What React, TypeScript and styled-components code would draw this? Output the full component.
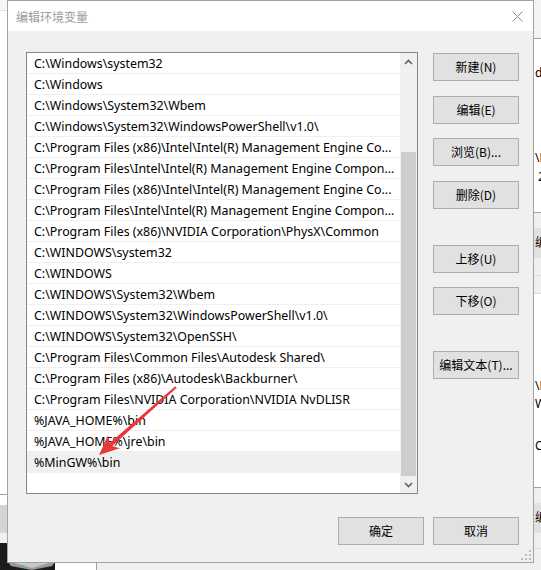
import React from 'react'
import styled, { createGlobalStyle } from 'styled-components'

const GlobalStyle = createGlobalStyle`
  html, body {
    margin: 0;
    padding: 0;
    background: #ffffff;
  }
  body {
    font-family: "Noto Sans", "Noto Sans CJK SC", sans-serif;
    font-size: 12px;
    color: #000000;
  }
  * {
    box-sizing: border-box;
  }
`

const paths = [
  'C:\\Windows\\system32',
  'C:\\Windows',
  'C:\\Windows\\System32\\Wbem',
  'C:\\Windows\\System32\\WindowsPowerShell\\v1.0\\',
  'C:\\Program Files (x86)\\Intel\\Intel(R) Management Engine Co...',
  'C:\\Program Files\\Intel\\Intel(R) Management Engine Compon...',
  'C:\\Program Files (x86)\\Intel\\Intel(R) Management Engine Co...',
  'C:\\Program Files\\Intel\\Intel(R) Management Engine Compon...',
  'C:\\Program Files (x86)\\NVIDIA Corporation\\PhysX\\Common',
  'C:\\WINDOWS\\system32',
  'C:\\WINDOWS',
  'C:\\WINDOWS\\System32\\Wbem',
  'C:\\WINDOWS\\System32\\WindowsPowerShell\\v1.0\\',
  'C:\\WINDOWS\\System32\\OpenSSH\\',
  'C:\\Program Files\\Common Files\\Autodesk Shared\\',
  'C:\\Program Files (x86)\\Autodesk\\Backburner\\',
  'C:\\Program Files\\NVIDIA Corporation\\NVIDIA NvDLISR',
  '%JAVA_HOME%\\bin',
  '%JAVA_HOME%\\jre\\bin',
  '%MinGW%\\bin',
]

const sideButtons = [
  { label: '新建(N)', mt: 1 },
  { label: '编辑(E)', mt: 15 },
  { label: '浏览(B)...', mt: 14 },
  { label: '删除(D)', mt: 15 },
  { label: '上移(U)', mt: 36 },
  { label: '下移(O)', mt: 14 },
  { label: '编辑文本(T)...', mt: 36 },
]

function App() {
  return (
    <>
      <GlobalStyle />
      <Desktop>
        {/* the window lying behind the dialog */}
        <LeftEdge>
          <Band $h={10} $bg='#f6f6f6' />
          <Band $h={1} $bg='#e3e3e3' />
          <Band $h={483} $bg='#ffffff' />
          <Band $h={1} $bg='#a0a0a0' />
          <Band $h={10} $bg='#ffffff' />
          <Band $h={28} $bg='#d4d4d4' />
          <Band $h={10} $bg='#f0f0f0' />
          <Band $h={27} $bg='#1c1c1c' />
        </LeftEdge>
        <RightEdge>
          <Band $h={38} $bg='#f4f4f4' />
          <Band $h={1} $bg='#a0a0a0' />
          <Band $h={173} $bg='#ffffff'>
            <Frag $mt={26}>dt</Frag>
            <Frag $mt={69}>\P</Frag>
            <Frag $mt={3}>&nbsp;2</Frag>
          </Band>
          <Band $h={1} $bg='#a0a0a0' />
          <Band $h={15} $bg='#f0f0f0' />
          <Band $h={30} $bg='#e1e1e1'>
            <Frag $mt={7}>编</Frag>
          </Band>
          <Band $h={17} $bg='#f0f0f0' />
          <Band $h={1} $bg='#dcdcdc' />
          <Band $h={17} $bg='#f0f0f0' />
          <Band $h={1} $bg='#dcdcdc' />
          <Band $h={193} $bg='#ffffff'>
            <Frag $mt={84}>\N</Frag>
            <Frag $mt={2}>W</Frag>
            <Frag $mt={26}>C</Frag>
          </Band>
          <Band $h={1} $bg='#a0a0a0' />
          <Band $h={15} $bg='#f0f0f0' />
          <Band $h={30} $bg='#e1e1e1'>
            <Frag $mt={7}>编</Frag>
          </Band>
          <Band $h={15} $bg='#f0f0f0' />
          <Band $h={1} $bg='#dcdcdc' />
          <Band $h={22} $bg='#f0f0f0' />
        </RightEdge>
        <BottomEdge>
          <DarkCell />
          <DriveIcon width='47' height='8' viewBox='0 0 47 8'>
            <rect width='47' height='8' fill='#1c1c1c' />
            <polygon points='0,0 47,0 44,4 24,8 3,4' fill='#9a9a9a' />
            <polygon points='3,0 44,0 24,6' fill='#c8c8c8' />
            <rect x='14' y='3' width='2' height='2' fill='#2ee82e' />
          </DriveIcon>
          <WhiteCell />
          <GrayCell />
        </BottomEdge>

        <Dialog>
          <TitleBar>
            <Title>编辑环境变量</Title>
            <CloseBtn>
              <svg width='11' height='11' viewBox='0 0 11 11'>
                <path d='M0.5 0.5 L10.5 10.5 M10.5 0.5 L0.5 10.5' stroke='#8a8a8a' strokeWidth='1' />
              </svg>
            </CloseBtn>
          </TitleBar>
          <Body>
            <Main>
              <ListBox>
                <Rows>
                  {paths.map((p, i) => (
                    <Row key={i} $selected={i === paths.length - 1}>
                      {p}
                    </Row>
                  ))}
                </Rows>
                <ScrollBar>
                  <ArrowBtn>
                    <svg width='9' height='6' viewBox='0 0 9 6'>
                      <polyline points='1,5 4.5,1.5 8,5' fill='none' stroke='#606060' strokeWidth='1.6' />
                    </svg>
                  </ArrowBtn>
                  <Track>
                    <Thumb />
                  </Track>
                  <ArrowBtn>
                    <svg width='9' height='6' viewBox='0 0 9 6'>
                      <polyline points='1,1 4.5,4.5 8,1' fill='none' stroke='#606060' strokeWidth='1.6' />
                    </svg>
                  </ArrowBtn>
                </ScrollBar>
              </ListBox>
              <SideColumn>
                {sideButtons.map((b) => (
                  <WinButton key={b.label} $mt={b.mt}>
                    {b.label}
                  </WinButton>
                ))}
              </SideColumn>
            </Main>
            <Footer>
              <WinButton>确定</WinButton>
              <WinButton>取消</WinButton>
            </Footer>
          </Body>
          <Grip width='10' height='10' viewBox='0 0 10 10'>
            <rect x='8' y='0' width='2' height='2' fill='#bdbdbd' />
            <rect x='4' y='4' width='2' height='2' fill='#bdbdbd' />
            <rect x='8' y='4' width='2' height='2' fill='#bdbdbd' />
            <rect x='0' y='8' width='2' height='2' fill='#bdbdbd' />
            <rect x='4' y='8' width='2' height='2' fill='#bdbdbd' />
            <rect x='8' y='8' width='2' height='2' fill='#bdbdbd' />
          </Grip>
        </Dialog>

        <Arrow width='541' height='570' viewBox='0 0 541 570'>
          <polygon
            points='175.3,386.3 109.7,442.9 108.2,435.3 99,455 119.8,448.3 112.3,445.9 176.7,387.8'
            fill='#e8383b'
          />
        </Arrow>
      </Desktop>
    </>
  )
}

const Desktop = styled.div`
position: relative;
width: 541px;
height: 570px;
overflow: hidden;
background: #ffffff;
`
const LeftEdge = styled.div`
position: absolute;
left: 0;
top: 0;
width: 8px;
height: 570px;
display: flex;
flex-direction: column;
`
const RightEdge = styled.div`
position: absolute;
left: 534px;
top: 0;
width: 7px;
height: 570px;
display: flex;
flex-direction: column;
`
const Band = styled.div<{ $h: number; $bg: string }>`
flex: 0 0 ${(p) => p.$h}px;
background: ${(p) => p.$bg};
display: flex;
flex-direction: column;
overflow: hidden;
`
const Frag = styled.span<{ $mt: number }>`
margin-top: ${(p) => p.$mt}px;
line-height: 16px;
padding-left: 1px;
white-space: nowrap;
color: #000;
`
const BottomEdge = styled.div`
position: absolute;
left: 0;
top: 562px;
width: 541px;
height: 8px;
display: flex;
`
const DarkCell = styled.div`
width: 8px;
background: #1c1c1c;
`
const DriveIcon = styled.svg`
display: block;
flex: 0 0 47px;
`
const WhiteCell = styled.div`
width: 42px;
background: #ffffff;
border-right: 1px solid #a0a0a0;
`
const GrayCell = styled.div`
flex: 1;
background: #f0f0f0;
`
const Dialog = styled.div`
position: absolute;
left: 7px;
top: 0;
width: 527px;
height: 563px;
border: 1px solid #a3a3a3;
background: #f0f0f0;
display: flex;
flex-direction: column;
`
const TitleBar = styled.div`
height: 30px;
background: #ffffff;
display: flex;
align-items: center;
justify-content: space-between;
`
const Title = styled.span`
padding-left: 8px;
color: #9b9b9b;
font-family: "Noto Sans CJK SC", sans-serif;
font-size: 12px;
line-height: 16px;
margin-top: 1px;
`
const CloseBtn = styled.div`
width: 32px;
height: 30px;
display: flex;
align-items: center;
justify-content: center;
svg {
    display: block;
}
`
const Body = styled.div`
flex: 1;
padding: 21px 14px 17px 18px;
display: flex;
flex-direction: column;
gap: 23px;
`
const Main = styled.div`
display: flex;
gap: 15px;
`
const ListBox = styled.div`
width: 392px;
height: 442px;
border: 1px solid #828790;
background: #ffffff;
display: flex;
`
const Rows = styled.div`
flex: 1;
min-width: 0;
display: flex;
flex-direction: column;
`
const Row = styled.div<{ $selected?: boolean }>`
height: 21px;
flex: 0 0 21px;
padding: 1px 7px 0 7px;
border-bottom: 1px solid ${(p) => (p.$selected ? '#f0f0f0' : '#efefef')};
background: ${(p) => (p.$selected ? '#f0f0f0' : '#ffffff')};
line-height: 20px;
font-size: 12.4px;
white-space: nowrap;
overflow: hidden;
color: #000;
`
const ScrollBar = styled.div`
width: 17px;
background: #f0f0f0;
display: flex;
flex-direction: column;
`
const ArrowBtn = styled.div`
height: 17px;
display: flex;
align-items: center;
justify-content: center;
svg {
    display: block;
}
`
const Track = styled.div`
flex: 1;
display: flex;
flex-direction: column;
justify-content: flex-end;
`
const Thumb = styled.div`
height: 324px;
margin: 0 1px;
background: #cdcdcd;
`
const SideColumn = styled.div`
width: 86px;
display: flex;
flex-direction: column;
`
const WinButton = styled.div<{ $mt?: number }>`
width: 86px;
height: 28px;
margin-top: ${(p) => p.$mt ?? 0}px;
background: #e1e1e1;
border: 1px solid #adadad;
display: flex;
align-items: center;
justify-content: center;
font-family: "Noto Sans CJK SC", sans-serif;
font-size: 12px;
line-height: 16px;
color: #000;
white-space: nowrap;
`
const Footer = styled.div`
display: flex;
justify-content: flex-end;
gap: 9px;
`
const Grip = styled.svg`
position: absolute;
right: 2px;
bottom: 2px;
display: block;
`
const Arrow = styled.svg`
position: absolute;
left: 0;
top: 0;
pointer-events: none;
`

export default App
